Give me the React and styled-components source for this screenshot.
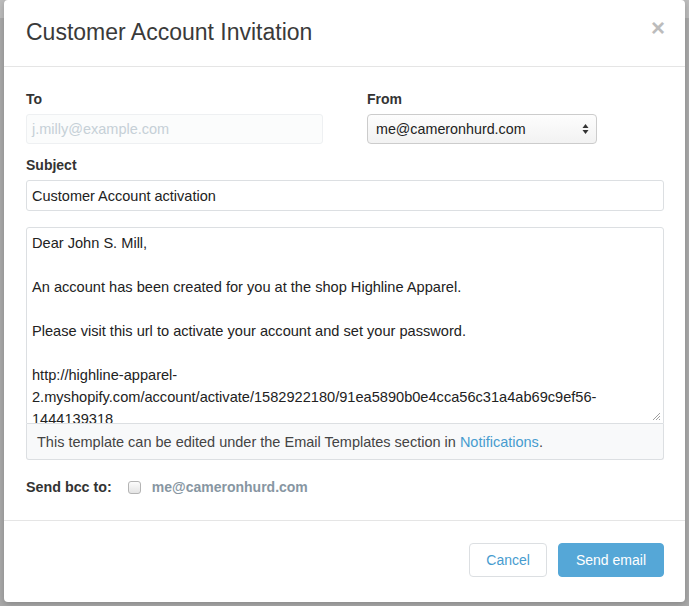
import React from "react";
import styled, { createGlobalStyle } from "styled-components";

const Global = createGlobalStyle`
  html, body { margin: 0; padding: 0; }
  body {
    font-family: "Liberation Sans", Arial, sans-serif;
    font-size: 14px;
    color: #333;
  }
`;

const Backdrop = styled.div`
  width: 689px;
  height: 606px;
  background: linear-gradient(#bcbcbc 0, #bcbcbc 18px, #a9a9a9 18px);
  padding: 0 4px;
  box-sizing: border-box;
  overflow: hidden;
`;

const Modal = styled.div`
  width: 681px;
  height: 602px;
  background: #fff;
  border-radius: 4px;
  box-shadow: 0 2px 6px rgba(0, 0, 0, 0.2);
  display: flex;
  flex-direction: column;
`;

const Header = styled.div`
  height: 67px;
  border-bottom: 1px solid #e5e5e5;
  display: flex;
  align-items: center;
  justify-content: space-between;
  padding: 0 21px 0 22px;
  box-sizing: border-box;
`;

const Title = styled.h1`
  margin: 0;
  font-size: 23px;
  font-weight: normal;
  color: #3a3a3a;
  position: relative;
  top: -1px;
`;

const Close = styled.span`
  font-size: 24px;
  font-weight: bold;
  color: #bcbcbc;
  line-height: 1;
  margin-top: -10px;
  margin-right: -1px;
`;

const Body = styled.div`
  flex: 1;
  padding: 22px 21px 0 22px;
  border-bottom: 1px solid #e5e5e5;
`;

const Row = styled.div`
  display: grid;
  grid-template-columns: 297px 297px;
  column-gap: 44px;
`;

const Field = styled.div`
  display: flex;
  flex-direction: column;
  margin-top: ${(p) => p.$top || 0}px;
`;

const Label = styled.label`
  font-weight: bold;
  font-size: 14px;
  line-height: 20px;
  margin-bottom: 5px;
  color: #333;
`;

const Input = styled.div`
  height: ${(p) => p.$h || 30}px;
  box-sizing: border-box;
  border: 1px solid ${(p) => (p.$muted ? "#eef0f2" : "#dcdfe2")};
  border-radius: 3px;
  background: ${(p) => (p.$muted ? "#fbfcfc" : "#fff")};
  color: ${(p) => (p.$muted ? "#c6d0d7" : "#222")};
  padding: 0 5px;
  display: flex;
  align-items: center;
  font-size: 14.5px;
`;

const Select = styled.div`
  width: 230px;
  height: 30px;
  box-sizing: border-box;
  border: 1px solid #ccc;
  border-radius: 4px;
  background: linear-gradient(#fdfdfd, #f2f2f2);
  display: flex;
  align-items: center;
  justify-content: space-between;
  padding: 0 7px 0 8px;
  font-size: 14.3px;
  color: #222;
`;

const Editor = styled.div`
  margin-top: 16px;
  height: 197px;
  box-sizing: border-box;
  border: 1px solid #dcdfe2;
  border-radius: 3px 3px 0 0;
  padding: 4px 5px;
  font-size: 14.6px;
  line-height: 22px;
  white-space: pre;
  overflow: hidden;
  position: relative;
  color: #222;
`;

const Grip = styled.svg`
  position: absolute;
  right: 2px;
  bottom: 2px;
`;

const Help = styled.div`
  height: 36px;
  box-sizing: border-box;
  border: 1px solid #dcdfe2;
  border-top: none;
  border-radius: 0 0 3px 3px;
  background: #f8f9fa;
  padding: 0 10px;
  display: flex;
  align-items: center;
  color: #444;
  font-size: 14.5px;
`;

const Link = styled.a`
  color: #479ccf;
  text-decoration: none;
`;

const Bcc = styled.div`
  display: flex;
  align-items: center;
  margin-top: 17px;
  line-height: 20px;
`;

const BccLabel = styled.span`
  font-weight: bold;
  font-size: 14.3px;
  color: #333;
  margin-right: 16px;
`;

const Check = styled.span`
  width: 11px;
  height: 11px;
  border: 1px solid #b4b4b4;
  border-radius: 3px;
  background: linear-gradient(#fcfcfc, #e4e4e4);
  margin-right: 11px;
`;

const BccMail = styled.span`
  font-weight: bold;
  color: #8796a2;
`;

const Footer = styled.div`
  height: 81px;
  display: flex;
  justify-content: flex-end;
  align-items: flex-start;
  gap: 11px;
  padding: 22px 21px 0 0;
  box-sizing: border-box;
`;

const Button = styled.button`
  height: 34px;
  box-sizing: border-box;
  padding: 0 ${(p) => (p.$primary ? 17 : 16)}px;
  border-radius: 4px;
  font-family: inherit;
  font-size: 14px;
  border: 1px solid ${(p) => (p.$primary ? "#55a7d7" : "#dcdfe2")};
  background: ${(p) => (p.$primary ? "#55a7d7" : "#fff")};
  color: ${(p) => (p.$primary ? "#fff" : "#479ccf")};
`;

const letter = [
  "Dear John S. Mill,",
  "",
  "An account has been created for you at the shop Highline Apparel.",
  "",
  "Please visit this url to activate your account and set your password.",
  "",
  "http://highline-apparel-",
  "2.myshopify.com/account/activate/1582922180/91ea5890b0e4cca56c31a4ab69c9ef56-",
  "1444139318",
].join("\n");

export default function App() {
  return (
    <Backdrop>
      <Global />
      <Modal>
        <Header>
          <Title>Customer Account Invitation</Title>
          <Close>×</Close>
        </Header>
        <Body>
          <Row>
            <Field>
              <Label>To</Label>
              <Input $muted>j.milly@example.com</Input>
            </Field>
            <Field>
              <Label>From</Label>
              <Select>
                me@cameronhurd.com
                <svg width="7" height="12" viewBox="0 0 7 12">
                  <path d="M3.5 1 L6.5 5 L0.5 5 Z M3.5 11 L6.5 7 L0.5 7 Z" fill="#333" />
                </svg>
              </Select>
            </Field>
          </Row>
          <Field $top={11}>
            <Label>Subject</Label>
            <Input $h={31}>Customer Account activation</Input>
          </Field>
          <Editor>
            {letter}
            <Grip width="9" height="9" viewBox="0 0 9 9">
              <path d="M1 8 L8 1 M4 8 L8 4 M7 8 L8 7" stroke="#888" strokeWidth="0.8" />
            </Grip>
          </Editor>
          <Help>
            <span>
              This template can be edited under the Email Templates section in{" "}
              <Link>Notifications</Link>.
            </span>
          </Help>
          <Bcc>
            <BccLabel>Send bcc to:</BccLabel>
            <Check />
            <BccMail>me@cameronhurd.com</BccMail>
          </Bcc>
        </Body>
        <Footer>
          <Button>Cancel</Button>
          <Button $primary>Send email</Button>
        </Footer>
      </Modal>
    </Backdrop>
  );
}
